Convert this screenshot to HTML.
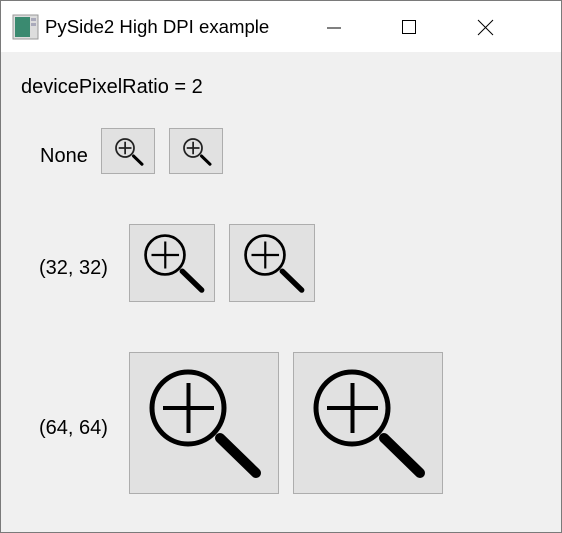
<!DOCTYPE html>
<html><head><style>
body{margin:0;width:562px;height:533px;overflow:hidden;background:#9aa;font-family:"Liberation Sans",sans-serif;position:relative}
.win{position:absolute;left:0;top:0;width:560px;height:531px;border:1px solid #7a7a7a;background:#f0f0f0}
.tb{position:absolute;left:0;top:0;width:560px;height:51px;background:#fff}
.t{position:absolute;font-size:20px;color:#000;white-space:nowrap}
svg{position:absolute;left:0;top:0}
</style></head><body>
<div class="win">
<div class="tb">
 <svg width="560" height="51">
  <rect x="12" y="14" width="25" height="24" fill="#ddd" stroke="#999"/>
  <rect x="14" y="16" width="15" height="20" fill="#3a8a70"/>
  <rect x="30" y="17" width="5" height="3" fill="#aab"/><rect x="30" y="22" width="5" height="3" fill="#aab"/>
  <line x1="326" y1="27" x2="340" y2="27" stroke="#000"/>
  <rect x="401.5" y="19.5" width="13" height="13" fill="none" stroke="#000"/>
  <path d="M477 19L492 34M492 19L477 34" stroke="#000"/>
 </svg>
 <div class="t" style="left:44px;top:15px;font-size:18.6px">PySide2 High DPI example</div>
</div>
<div class="t" style="left:20px;top:75px">devicePixelRatio = 2</div>
<div class="t" style="left:39px;top:144px">None</div>
<div class="t" style="left:38px;top:256px">(32, 32)</div>
<div class="t" style="left:38px;top:416px">(64, 64)</div>
</div>
<svg width="562" height="533">
 <defs>
 <g id="ic2">
  <circle cx="0" cy="0" r="36" fill="none" stroke="#000" stroke-width="5"/>
  <path d="M-25 0H26M0.5 -25V25" stroke="#000" stroke-width="4"/>
  <path d="M32 30L68 65" stroke="#000" stroke-width="10" stroke-linecap="round"/>
 </g>
 <g id="ics">
  <circle cx="0" cy="0" r="36" fill="none" stroke="#222" stroke-width="7"/>
  <path d="M-25 0H26M0.5 -25V25" stroke="#222" stroke-width="7"/>
  <path d="M34 32L68 65" stroke="#000" stroke-width="12" stroke-linecap="round"/>
 </g>
 </defs>
 <rect x="101.5" y="128.5" width="53" height="45" fill="#e1e1e1" stroke="#adadad"/>
 <rect x="169.5" y="128.5" width="53" height="45" fill="#e1e1e1" stroke="#adadad"/>
 <rect x="129.5" y="224.5" width="85" height="77" fill="#e1e1e1" stroke="#adadad"/>
 <rect x="229.5" y="224.5" width="85" height="77" fill="#e1e1e1" stroke="#adadad"/>
 <rect x="129.5" y="352.5" width="149" height="141" fill="#e1e1e1" stroke="#adadad"/>
 <rect x="293.5" y="352.5" width="149" height="141" fill="#e1e1e1" stroke="#adadad"/>
 <g transform="translate(125,148) scale(0.25)"><use href="#ics"/></g>
 <g transform="translate(193,148) scale(0.25)"><use href="#ics"/></g>
 <g transform="translate(165,255) scale(0.54)"><use href="#ic2"/></g>
 <g transform="translate(265,255) scale(0.54)"><use href="#ic2"/></g>
 <g transform="translate(188,408)"><use href="#ic2"/></g>
 <g transform="translate(352,408)"><use href="#ic2"/></g>
</svg>
</body></html>
